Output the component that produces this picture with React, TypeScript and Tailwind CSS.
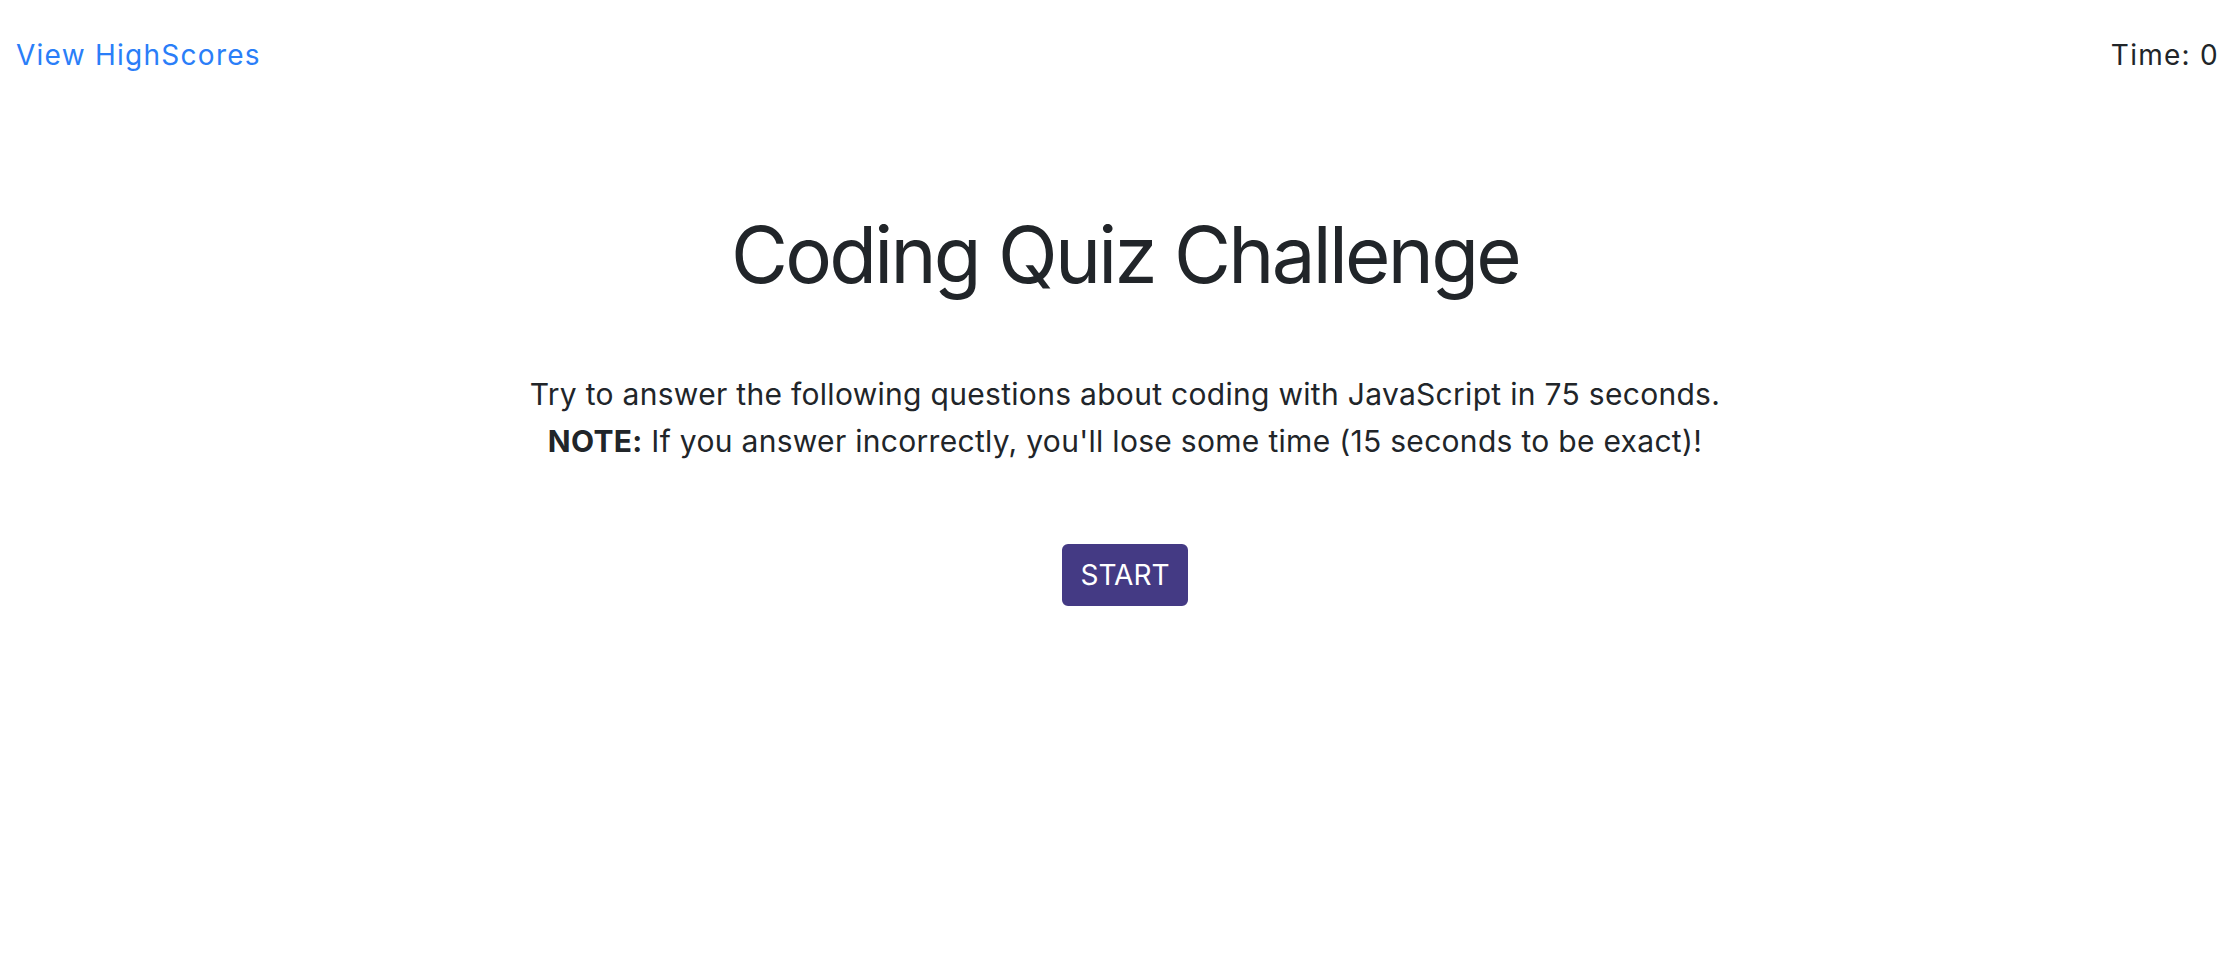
export default function App() {
  return (
    <div
      className="min-h-screen bg-white text-[#212529]"
      style={{ fontFamily: "Inter, 'Noto Sans', sans-serif" }}
    >
      {/* Header */}
      <header className="flex justify-between items-center pl-4 pr-[19px] pt-[34px] text-[28px] leading-[42px] tracking-[0.045em]">
        <a href="#" className="text-[#2a7ef8]">
          View HighScores
        </a>
        <span>Time: 0</span>
      </header>

      {/* Intro */}
      <main className="flex flex-col items-center text-center pl-[12px]">
        <h1 className="mt-[131px] text-[78px] leading-[96px] font-normal tracking-[-0.035em]">
          Coding Quiz Challenge
        </h1>
        <p className="mt-[68px] text-[30px] leading-[47px] tracking-[0.01em]">
          Try to answer the following questions about coding with JavaScript in 75 seconds.
          <br />
          <strong className="font-bold">NOTE:</strong> If you answer incorrectly, you'll lose some
          time (15 seconds to be exact)!
        </p>
        <button className="mt-[79px] h-[62px] px-4 rounded-[6px] bg-[#443a84] text-white text-[28px] leading-[42px] border-2 border-[#443a84]">
          START
        </button>
      </main>
    </div>
  );
}
